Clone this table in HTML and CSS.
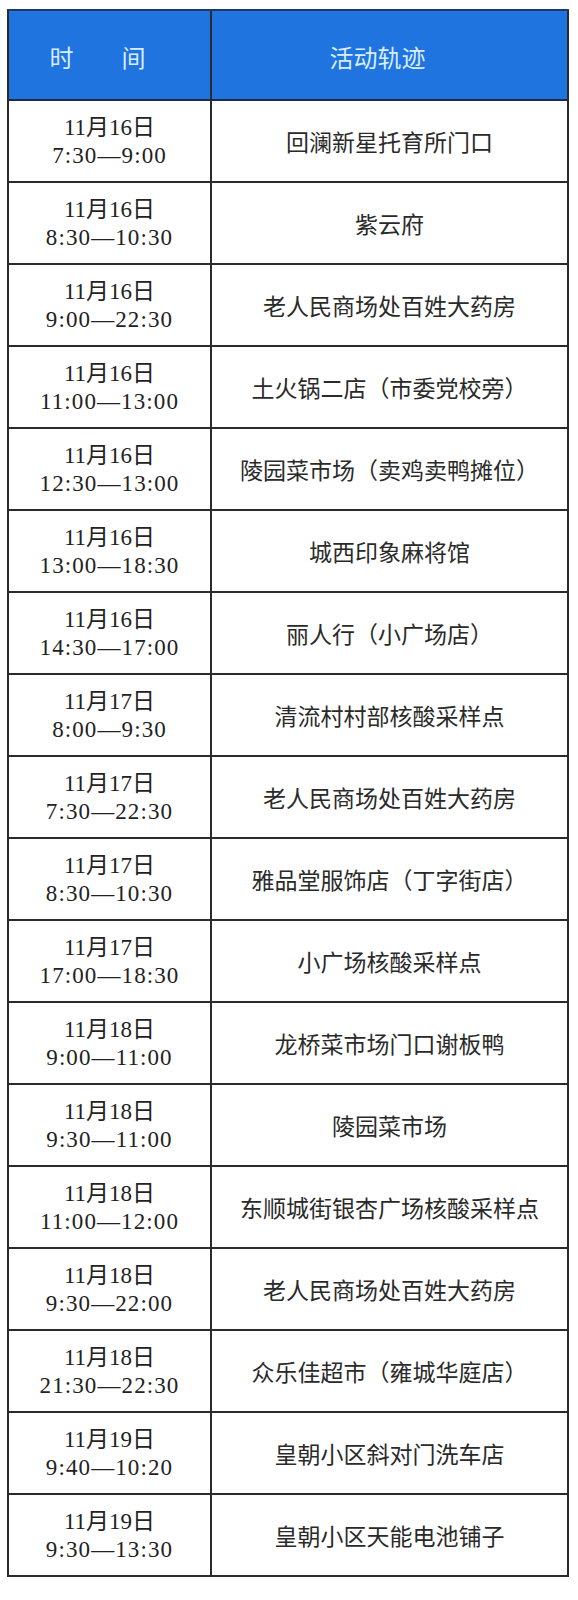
FILE: index.html
```html
<!DOCTYPE html>
<html lang="zh-CN">
<head>
<meta charset="utf-8">
<title>活动轨迹</title>
<link rel="stylesheet" href="styles.css">
</head>
<body>
<div class="track">
  <div class="cell head">时　　间</div>
  <div class="cell head">活动轨迹</div>

  <div class="cell time"><div>11月16日</div><div class="span">7:30—9:00</div></div><div class="cell place">回澜新星托育所门口</div>
  <div class="cell time"><div>11月16日</div><div class="span">8:30—10:30</div></div><div class="cell place">紫云府</div>
  <div class="cell time"><div>11月16日</div><div class="span">9:00—22:30</div></div><div class="cell place">老人民商场处百姓大药房</div>
  <div class="cell time"><div>11月16日</div><div class="span">11:00—13:00</div></div><div class="cell place">土火锅二店（市委党校旁）</div>
  <div class="cell time"><div>11月16日</div><div class="span">12:30—13:00</div></div><div class="cell place">陵园菜市场（卖鸡卖鸭摊位）</div>
  <div class="cell time"><div>11月16日</div><div class="span">13:00—18:30</div></div><div class="cell place">城西印象麻将馆</div>
  <div class="cell time"><div>11月16日</div><div class="span">14:30—17:00</div></div><div class="cell place">丽人行（小广场店）</div>
  <div class="cell time"><div>11月17日</div><div class="span">8:00—9:30</div></div><div class="cell place">清流村村部核酸采样点</div>
  <div class="cell time"><div>11月17日</div><div class="span">7:30—22:30</div></div><div class="cell place">老人民商场处百姓大药房</div>
  <div class="cell time"><div>11月17日</div><div class="span">8:30—10:30</div></div><div class="cell place">雅品堂服饰店（丁字街店）</div>
  <div class="cell time"><div>11月17日</div><div class="span">17:00—18:30</div></div><div class="cell place">小广场核酸采样点</div>
  <div class="cell time"><div>11月18日</div><div class="span">9:00—11:00</div></div><div class="cell place">龙桥菜市场门口谢板鸭</div>
  <div class="cell time"><div>11月18日</div><div class="span">9:30—11:00</div></div><div class="cell place">陵园菜市场</div>
  <div class="cell time"><div>11月18日</div><div class="span">11:00—12:00</div></div><div class="cell place">东顺城街银杏广场核酸采样点</div>
  <div class="cell time"><div>11月18日</div><div class="span">9:30—22:00</div></div><div class="cell place">老人民商场处百姓大药房</div>
  <div class="cell time"><div>11月18日</div><div class="span">21:30—22:30</div></div><div class="cell place">众乐佳超市（雍城华庭店）</div>
  <div class="cell time"><div>11月19日</div><div class="span">9:40—10:20</div></div><div class="cell place">皇朝小区斜对门洗车店</div>
  <div class="cell time"><div>11月19日</div><div class="span">9:30—13:30</div></div><div class="cell place">皇朝小区天能电池铺子</div>
</div>
</body>
</html>
```
FILE: styles.css
```css
html, body {
  margin: 0;
  padding: 0;
  background: #ffffff;
}

body {
  padding: 9px 0 0 7px;
}

.track {
  width: 562px;
  box-sizing: border-box;
  display: grid;
  grid-template-columns: 203px 357px;
  grid-template-rows: 90px;
  grid-auto-rows: 82px;
  border-left: 2px solid #2b2b2b;
  border-top: 2px solid #1c3a66;
  font-family: "Liberation Serif", "Noto Sans CJK SC", serif;
  color: #222222;
}

.cell {
  box-sizing: border-box;
  border-right: 2px solid #2b2b2b;
  border-bottom: 2px solid #2b2b2b;
  display: flex;
  flex-direction: column;
  justify-content: center;
  align-items: center;
  text-align: center;
}

.head {
  background: #1f74e0;
  color: #d9ecff;
  font-family: "Noto Sans CJK SC", sans-serif;
  font-weight: 400;
  font-size: 24px;
  padding-right: 24px;
  padding-top: 2px;
  border-bottom-color: #1c2c4a;
}

.time {
  font-size: 23px;
  line-height: 28px;
  padding-top: 1px;
}

.time .span {
  letter-spacing: 1.1px;
}

.place {
  font-family: "Noto Sans CJK SC", sans-serif;
  font-size: 23px;
  line-height: 28px;
  color: #2a2a2a;
}
```
